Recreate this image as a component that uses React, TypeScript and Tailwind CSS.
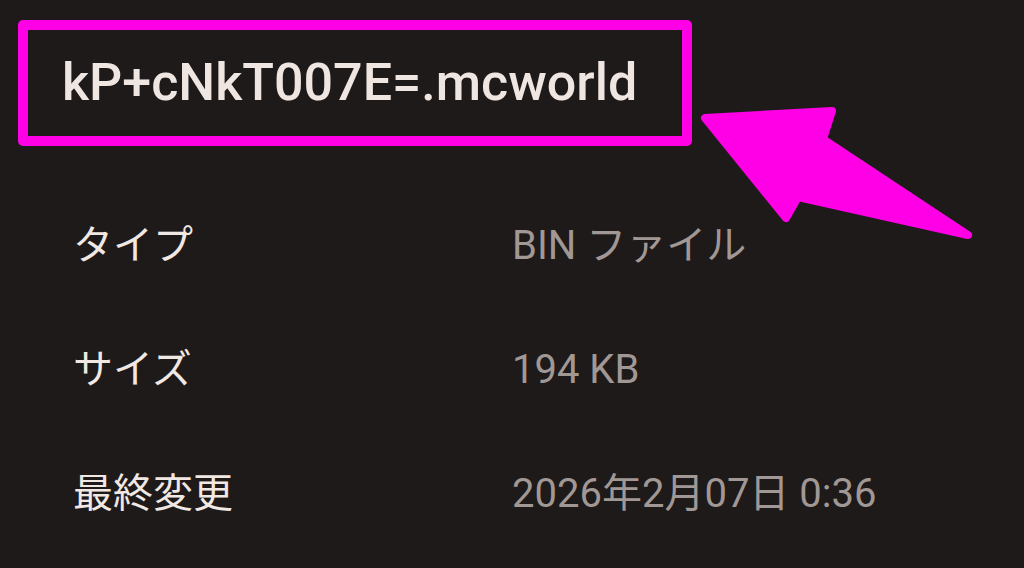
const rows = [
  { label: 'タイプ', value: 'BIN ファイル' },
  { label: 'サイズ', value: '194 KB' },
  { label: '最終変更', value: '2026年2月07日 0:36' },
]

const Arrow = () => (
  <svg
    className="pointer-events-none absolute left-0 top-0"
    width="1024"
    height="568"
    viewBox="0 0 1024 568"
  >
    <polygon
      points="705,118 832,111 823,139 968,235 798,197 786,218"
      fill="#ff00e6"
      stroke="#ff00e6"
      strokeWidth="8"
      strokeLinejoin="round"
    />
  </svg>
)

export default function App() {
  return (
    <div
      className="relative h-[568px] w-[1024px] overflow-hidden bg-[#1e1a1a]"
      style={{ fontFamily: 'Roboto, "Noto Sans CJK JP", sans-serif' }}
    >
      <div className="pl-[18px] pt-[20px]">
        <div className="flex h-[126px] w-[674px] items-center rounded-[5px] border-[10px] border-[#ff00e6] pl-[34px]">
          <span className="text-[52px] font-medium leading-none text-[#efe6e2]">
            kP+cNkT007E=.mcworld
          </span>
        </div>
      </div>

      <div className="flex flex-col pl-[73px] pt-[38px]">
        {rows.map((row) => (
          <div key={row.label} className="flex h-[124px] items-center">
            <span className="w-[439px] text-[40px] text-[#f1e8e4]">{row.label}</span>
            <span className="text-[40px] text-[#a19895]">{row.value}</span>
          </div>
        ))}
      </div>

      <Arrow />
    </div>
  )
}
